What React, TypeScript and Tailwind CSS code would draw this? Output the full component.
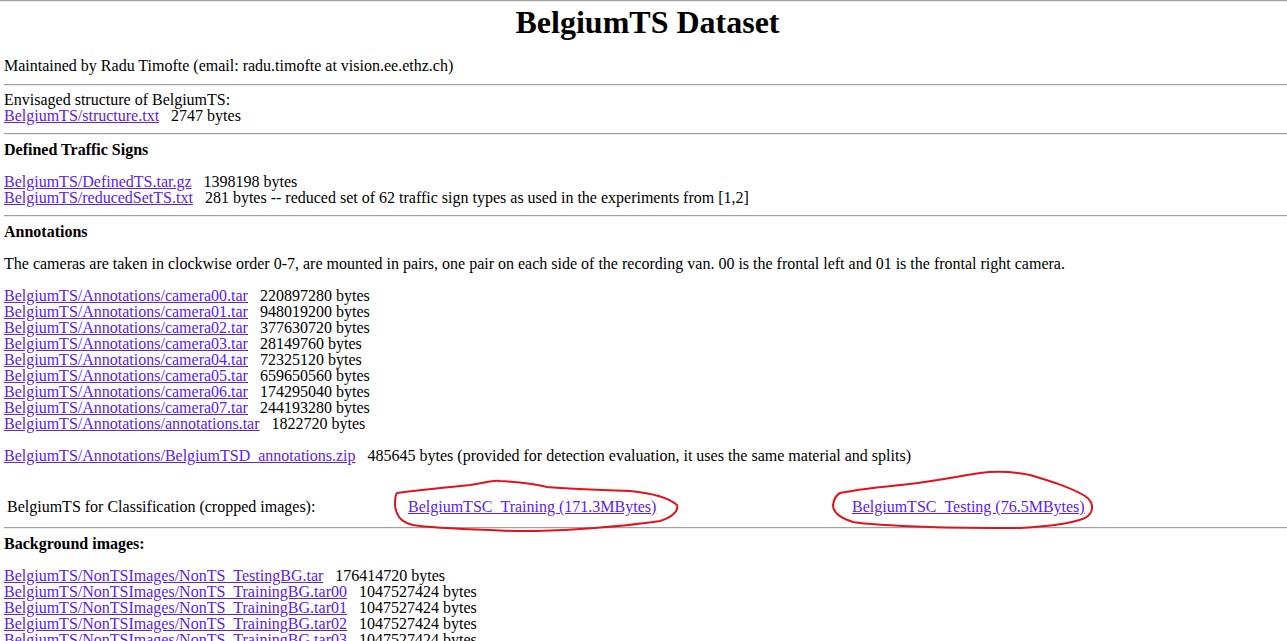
const link = "text-[#5b21f0] underline";

function Hr({ className = "" }: { className?: string }) {
  return <div className={`border-t border-t-[#a0a0a0] border-b border-b-[#ececec] ${className}`} />;
}

function FileRow({ href, info }: { href: string; info: string }) {
  return (
    <div className="whitespace-nowrap">
      <a href="#" className={link}>{href}</a>
      <span>{"\u00a0\u00a0\u00a0"}{info}</span>
    </div>
  );
}

const cameras = [
  ["BelgiumTS/Annotations/camera00.tar", "220897280 bytes"],
  ["BelgiumTS/Annotations/camera01.tar", "948019200 bytes"],
  ["BelgiumTS/Annotations/camera02.tar", "377630720 bytes"],
  ["BelgiumTS/Annotations/camera03.tar", "28149760 bytes"],
  ["BelgiumTS/Annotations/camera04.tar", "72325120 bytes"],
  ["BelgiumTS/Annotations/camera05.tar", "659650560 bytes"],
  ["BelgiumTS/Annotations/camera06.tar", "174295040 bytes"],
  ["BelgiumTS/Annotations/camera07.tar", "244193280 bytes"],
  ["BelgiumTS/Annotations/annotations.tar", "1822720 bytes"],
];

const background = [
  ["BelgiumTS/NonTSImages/NonTS_TestingBG.tar", "176414720 bytes"],
  ["BelgiumTS/NonTSImages/NonTS_TrainingBG.tar00", "1047527424 bytes"],
  ["BelgiumTS/NonTSImages/NonTS_TrainingBG.tar01", "1047527424 bytes"],
  ["BelgiumTS/NonTSImages/NonTS_TrainingBG.tar02", "1047527424 bytes"],
  ["BelgiumTS/NonTSImages/NonTS_TrainingBG.tar03", "1047527424 bytes"],
  ["BelgiumTS/NonTSImages/NonTS_TrainingBG.tar04", "1047527424 bytes"],
];

export default function App() {
  return (
    <div className="h-screen overflow-hidden bg-white text-black font-['Liberation_Serif',serif] text-[16px] leading-[16px]">
      <div className="relative w-[1291px]">
        <Hr />
        <div className="pl-[4px]">
          <h1 className="mt-[2px] text-center text-[32px] leading-[36px] font-bold">BelgiumTS Dataset</h1>

          <p className="mt-[18px]">Maintained by Radu Timofte (email: radu.timofte at vision.ee.ethz.ch)</p>
          <Hr className="mt-[10px]" />

          <p className="mt-[6px]">Envisaged structure of BelgiumTS:</p>
          <FileRow href="BelgiumTS/structure.txt" info="2747 bytes" />
          <Hr className="mt-[9px]" />

          <h3 className="mt-[7px] font-bold">Defined Traffic Signs</h3>
          <div className="mt-[16px]">
            <FileRow href="BelgiumTS/DefinedTS.tar.gz" info="1398198 bytes" />
            <FileRow
              href="BelgiumTS/reducedSetTS.txt"
              info="281 bytes -- reduced set of 62 traffic sign types as used in the experiments from [1,2]"
            />
          </div>
          <Hr className="mt-[9px]" />

          <h3 className="mt-[7px] font-bold">Annotations</h3>
          <p className="mt-[16px]">
            The cameras are taken in clockwise order 0-7, are mounted in pairs, one pair on each side of the recording van. 00 is the frontal left and 01 is the frontal right camera.
          </p>
          <div className="mt-[16px]">
            {cameras.map(([h, i]) => (
              <FileRow key={h} href={h} info={i} />
            ))}
          </div>
          <div className="mt-[16px]">
            <FileRow
              href="BelgiumTS/Annotations/BelgiumTSD_annotations.zip"
              info="485645 bytes (provided for detection evaluation, it uses the same material and splits)"
            />
          </div>

          <div className="mt-[35px] grid grid-cols-[401px_444px_1fr]">
            <div className="px-[3px]">BelgiumTS for Classification (cropped images):</div>
            <div className="px-[3px]">
              <a href="#" className={link}>BelgiumTSC_Training (171.3MBytes)</a>
            </div>
            <div className="px-[3px]">
              <a href="#" className={link}>BelgiumTSC_Testing (76.5MBytes)</a>
            </div>
          </div>
          <Hr className="mt-[12px]" />

          <h3 className="mt-[7px] font-bold">Background images:</h3>
          <div className="mt-[16px]">
            {background.map(([h, i]) => (
              <FileRow key={h} href={h} info={i} />
            ))}
          </div>
        </div>

        <svg className="absolute left-0 top-0 pointer-events-none" width="1287" height="641" fill="none">
          <path
            d="M397 493 C410 491 440 488 470 485 C485 483 492 480 500 481 C515 482 530 483 547 487 C570 489 600 490 630 491 C650 493 668 497 677 505 C679 512 670 518 660 521 C640 524 610 527 580 529 C550 531 520 532 490 530 C460 529 430 528 413 525 C400 522 396 515 395 505 C395 498 396 494 397 493 Z"
            stroke="#e3131b"
            strokeWidth="2"
            strokeLinejoin="round"
          />
          <path
            d="M840 493 C855 490 880 487 910 484 C935 481 955 477 980 473 C995 471 1015 472 1030 475 C1050 481 1070 487 1085 496 C1094 502 1095 512 1085 518 C1070 524 1050 526 1020 528 C990 528 960 528 930 527 C900 526 870 525 853 522 C840 518 833 512 833 505 C834 499 836 495 840 493 Z"
            stroke="#e3131b"
            strokeWidth="2"
            strokeLinejoin="round"
          />
        </svg>
      </div>
    </div>
  );
}
